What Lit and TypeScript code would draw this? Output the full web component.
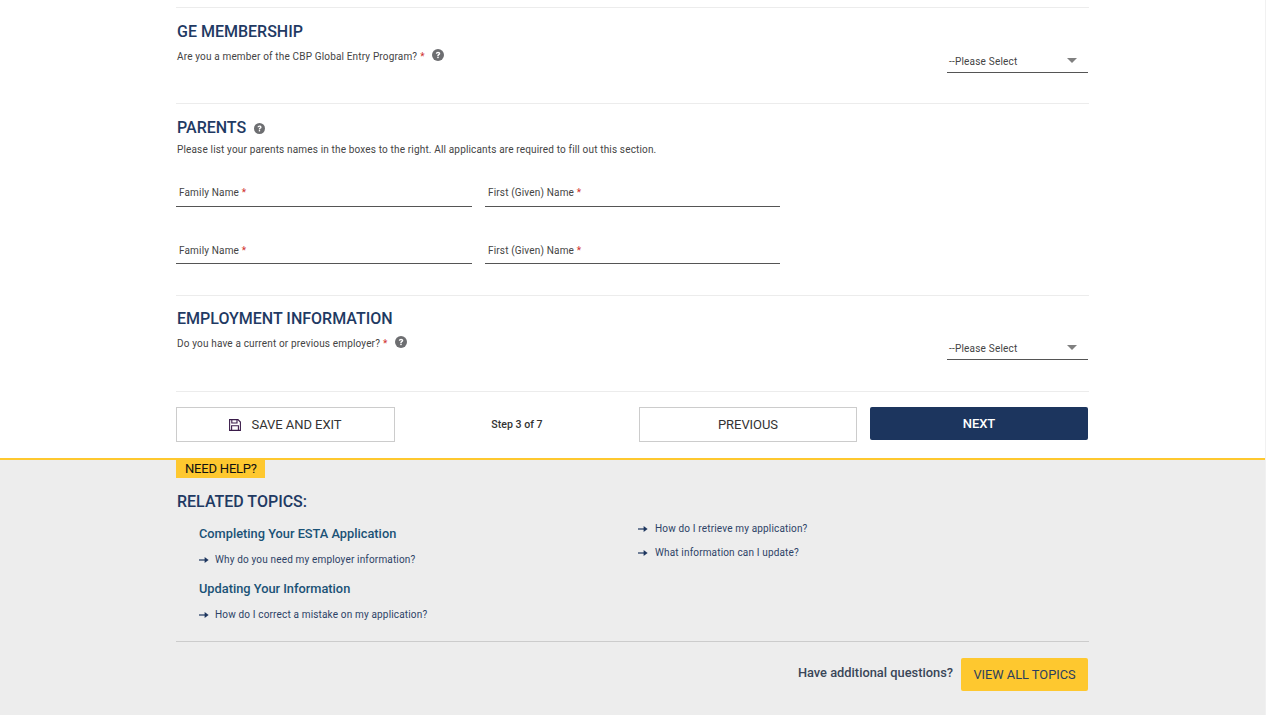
import { LitElement, html, css } from 'lit';
import { customElement } from 'lit/decorators.js';

const helpIcon = (size: number) => html`<svg class="help" width=${size} height=${size} viewBox="0 0 24 24">
  <circle cx="12" cy="12" r="12" fill="#6d6e71"></circle>
  <path d="M7.6 9.3c.2-2.5 2-4 4.5-4 2.6 0 4.4 1.5 4.4 3.7 0 1.6-.9 2.5-2 3.2-.9.6-1.1 1-1.1 2h-2.9c0-1.9.5-2.8 1.7-3.6.9-.6 1.3-1 1.3-1.5 0-.6-.6-1.1-1.4-1.1-.9 0-1.5.5-1.6 1.5z" fill="#fff"></path>
  <rect x="10.5" y="15.3" width="2.9" height="3" fill="#fff"></rect>
</svg>`;

const arrow = html`<svg class="arrow" width="10" height="8" viewBox="0 0 10 8">
  <path d="M0 4h7" stroke="#1c355e" stroke-width="1.2" fill="none"></path>
  <path d="M5.6 1l4 3-4 3z" fill="#1c355e"></path>
</svg>`;

const saveIcon = html`<svg width="12" height="12" viewBox="0 0 12 12" fill="none" stroke="#3a1c4a" stroke-width="1.1">
  <path d="M.6.6h8.4l2.4 2.4v8.4H.6z"></path>
  <path d="M2.8.8v3.2h5.2V.8"></path>
  <path d="M2.6 11.2V6.8h6.8v4.4"></path>
</svg>`;

@customElement('app-root')
export class AppRoot extends LitElement {
  static styles = css`
    :host {
      display: block;
      box-sizing: border-box;
      width: 100%;
      height: 715px;
      overflow: hidden;
      background: #fff;
      border-right: 1px solid #f1f1f1;
      font-family: Roboto, 'Liberation Sans', sans-serif;
      color: #3c4043;
    }
    .wrap {
      width: 913px;
      margin-left: 176px;
    }
    .form {
      height: 458px;
      padding-top: 7px;
      box-sizing: border-box;
    }
    .section {
      border-top: 1px solid #ececec;
      box-sizing: border-box;
    }
    .s-ge {
      height: 96px;
      padding-top: 13px;
    }
    .s-parents {
      height: 192px;
      padding-top: 13px;
    }
    .s-emp {
      height: 96px;
      padding-top: 12px;
    }
    h2 {
      margin: 0;
      font-size: 16px;
      line-height: 22px;
      font-weight: 500;
      color: #1f3a63;
      padding-left: 1px;
      display: flex;
      align-items: center;
      gap: 8px;
    }
    .row {
      display: flex;
      justify-content: space-between;
    }
    .q {
      font-size: 10px;
      letter-spacing: 0.16px;
      line-height: 14px;
      color: #444;
      padding-left: 1px;
      margin-top: 7px;
      height: 14px;
      display: flex;
      align-items: center;
    }
    .req {
      color: #d0312d;
      margin-left: 3px;
    }
    .help {
      display: block;
      flex: none;
    }
    .q .help {
      margin-left: 7px;
      margin-top: -4px;
    }
    .select {
      width: 141px;
      height: 22px;
      margin: 8px 1px 0 0;
      border-bottom: 1px solid #555;
      box-sizing: border-box;
      display: flex;
      align-items: center;
      justify-content: space-between;
      padding: 0 11px 1px 2px;
      font-size: 10px;
      letter-spacing: 0.2px;
      color: #444;
    }
    .caret {
      width: 0;
      height: 0;
      border-left: 5px solid transparent;
      border-right: 5px solid transparent;
      border-top: 5px solid #808080;
      margin-top: -1px;
    }
    .intro {
      font-size: 10px;
      letter-spacing: 0.16px;
      line-height: 14px;
      color: #444;
      padding-left: 1px;
      margin: 4px 0 0;
    }
    .names {
      display: grid;
      grid-template-columns: 296px 295px;
      column-gap: 13px;
      row-gap: 29px;
      margin-top: 22px;
    }
    .field {
      height: 28px;
      border-bottom: 1px solid #555;
      box-sizing: border-box;
      font-size: 10px;
      letter-spacing: 0.16px;
      color: #444;
      padding: 8px 0 0 3px;
      line-height: 14px;
    }
    .field:nth-child(-n + 2) {
      padding-top: 7px;
    }
    .field .req {
      margin-left: 0;
    }
    .actions {
      border-top: 1px solid #ececec;
      padding-top: 15px;
      display: flex;
      align-items: flex-start;
      height: 67px;
      box-sizing: border-box;
    }
    .btn {
      box-sizing: border-box;
      height: 35px;
      border: 1px solid #ccc;
      background: #fff;
      display: flex;
      align-items: center;
      justify-content: center;
      gap: 10px;
      font-size: 13px;
      letter-spacing: -0.05px;
      color: #333;
    }
    .save {
      width: 219px;
    }
    .step {
      width: 244px;
      text-align: center;
      font-size: 10.6px;
      font-weight: 500;
      line-height: 35px;
      color: #333;
    }
    .prev {
      width: 218px;
    }
    .next {
      width: 218px;
      height: 33px;
      margin-left: 13px;
      border: none;
      border-radius: 2px;
      background: #1c355e;
      color: #fff;
      font-weight: 500;
    }
    .help-panel {
      height: 257px;
      background: #ededed;
      border-top: 2px solid #fec82f;
      box-sizing: border-box;
    }
    .badge {
      display: inline-block;
      background: #fec82f;
      color: #111;
      font-size: 13px;
      letter-spacing: -0.2px;
      line-height: 18px;
      padding: 0 8px 0 9px;
      vertical-align: top;
    }
    h3 {
      margin: 13px 0 0;
      font-size: 16px;
      line-height: 20px;
      font-weight: 500;
      color: #1f3a63;
      padding-left: 1px;
    }
    .topics {
      display: grid;
      grid-template-columns: 462px 1fr;
      height: 120px;
      border-bottom: 1px solid #ccc;
      box-sizing: border-box;
      margin-top: 10px;
    }
    .col-a {
      padding: 3px 0 0 23px;
    }
    .col-a h4 {
      margin: 0;
      font-size: 12.8px;
      line-height: 18px;
      font-weight: 500;
      color: #1a5276;
    }
    .col-a ul {
      margin: 10px 0 13px;
    }
    ul {
      list-style: none;
      padding: 0;
    }
    li {
      display: flex;
      align-items: center;
      gap: 6px;
      font-size: 10px;
      letter-spacing: 0.16px;
      line-height: 14px;
      color: #2c4266;
    }
    .col-b ul {
      margin: 0;
      display: flex;
      flex-direction: column;
      gap: 10px;
    }
    .col-b li {
      gap: 7px;
    }
    .more {
      display: flex;
      justify-content: flex-end;
      align-items: flex-start;
      gap: 8px;
      padding: 16px 1px 0 0;
    }
    .more span {
      font-size: 12.85px;
      font-weight: 500;
      line-height: 30px;
      color: #3a4658;
    }
    .all {
      width: 127px;
      height: 33px;
      border-radius: 2px;
      background: #fec82f;
      display: flex;
      align-items: center;
      justify-content: center;
      font-size: 12.8px;
      color: #2c3e5e;
    }
  `;

  render() {
    return html`
      <div class="form">
        <div class="wrap">
          <section class="section s-ge">
            <h2>GE MEMBERSHIP</h2>
            <div class="row">
              <div class="q">Are you a member of the CBP Global Entry Program?<span class="req">*</span>${helpIcon(12)}</div>
              <div class="select">--Please Select<i class="caret"></i></div>
            </div>
          </section>
          <section class="section s-parents">
            <h2>PARENTS ${helpIcon(11)}</h2>
            <p class="intro">Please list your parents names in the boxes to the right. All applicants are required to fill out this section.</p>
            <div class="names">
              <div class="field">Family Name <span class="req">*</span></div>
              <div class="field">First (Given) Name <span class="req">*</span></div>
              <div class="field">Family Name <span class="req">*</span></div>
              <div class="field">First (Given) Name <span class="req">*</span></div>
            </div>
          </section>
          <section class="section s-emp">
            <h2>EMPLOYMENT INFORMATION</h2>
            <div class="row">
              <div class="q">Do you have a current or previous employer?<span class="req">*</span>${helpIcon(12)}</div>
              <div class="select">--Please Select<i class="caret"></i></div>
            </div>
          </section>
          <div class="actions">
            <div class="btn save">${saveIcon} SAVE AND EXIT</div>
            <div class="step">Step 3 of 7</div>
            <div class="btn prev">PREVIOUS</div>
            <div class="btn next">NEXT</div>
          </div>
        </div>
      </div>
      <div class="help-panel">
        <div class="wrap">
          <span class="badge">NEED HELP?</span>
          <h3>RELATED TOPICS:</h3>
          <div class="topics">
            <div class="col-a">
              <h4>Completing Your ESTA Application</h4>
              <ul><li>${arrow} Why do you need my employer information?</li></ul>
              <h4>Updating Your Information</h4>
              <ul><li>${arrow} How do I correct a mistake on my application?</li></ul>
            </div>
            <div class="col-b">
              <ul>
                <li>${arrow} How do I retrieve my application?</li>
                <li>${arrow} What information can I update?</li>
              </ul>
            </div>
          </div>
          <div class="more">
            <span>Have additional questions?</span>
            <div class="all">VIEW ALL TOPICS</div>
          </div>
        </div>
      </div>
    `;
  }
}
